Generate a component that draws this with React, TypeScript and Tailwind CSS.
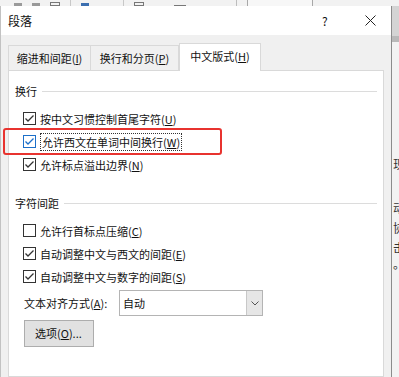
import React from "react";

const font = "font-['Noto_Sans_CJK_SC',sans-serif]";

function CheckBox({ checked, focus }: { checked: boolean; focus?: boolean }) {
  const c = focus ? "#1c6fc9" : "#333333";
  return (
    <span
      className="flex h-[13px] w-[13px] shrink-0 items-center justify-center border bg-white"
      style={{ borderColor: c }}
    >
      {checked && (
        <svg width="11" height="11" viewBox="0 0 11 11">
          <polyline points="1.5,5.5 4,8 9.5,2.5" fill="none" stroke={c} strokeWidth="1.3" />
        </svg>
      )}
    </span>
  );
}

function Row({
  checked,
  label,
  mnemonic,
  focus,
}: {
  checked: boolean;
  label: string;
  mnemonic: string;
  focus?: boolean;
}) {
  return (
    <div className="relative flex h-[23px] items-center gap-[4px] pl-[14px]">
      <CheckBox checked={checked} focus={focus} />
      <span className={focus ? "border border-dotted border-[#333] px-px leading-[16px]" : "leading-[16px]"}>
        {label}(<u>{mnemonic}</u>)
      </span>
      {focus && (
        <span className="absolute -left-[6px] -top-[2px] h-[27px] w-[219px] rounded-[3px] border-[2.5px] border-[#e8332f]" />
      )}
    </div>
  );
}

function Section({ title, children }: { title: string; children: React.ReactNode }) {
  return (
    <div className="flex flex-col">
      <div className="flex items-center gap-[5px] pl-[6px] pr-[6px] leading-[16px]">
        <span>{title}</span>
        <span className="h-px flex-1 bg-[#dcdcdc]" />
      </div>
      <div className="mt-[8px] flex flex-col">{children}</div>
    </div>
  );
}

export default function App() {
  return (
    <div className={`${font} h-[377px] w-[399px] overflow-hidden bg-[#e9e9e9] text-[11px] text-[#111]`}>
      {/* ribbon strip behind the dialog */}
      <div className="flex h-[6px] items-end gap-[10px] bg-[#f2f2f2] pl-[14px]">
        <span className="h-[3px] w-[8px] bg-[#9a9a9a]" />
        <span className="h-[3px] w-[8px] bg-[#9a9a9a]" />
        <span className="h-[4px] w-[10px] border border-[#777]" />
        <span className="h-[6px] w-px bg-[#c8c8c8]" />
        <span className="h-[3px] w-[8px] bg-[#3b6fb0]" />
        <span className="ml-[24px] h-[6px] w-px bg-[#c8c8c8]" />
        <span className="h-[4px] w-[10px] border border-[#777]" />
        <span className="ml-[20px] h-px w-[12px] bg-[#777]" />
        <span className="ml-[40px] h-[6px] w-px bg-[#bdbdbd]" />
        <span className="h-[6px] w-[66px] border-x border-[#a8a8a8] bg-[#f7f7f7]" />
      </div>

      <div className="flex h-[371px]">
        {/* dialog */}
        <div className="flex w-[392px] flex-col border-l border-r border-[#c2c2c2] border-r-[#8c8c8c] bg-[#f0f0f0]">
          <div className="flex h-[29px] shrink-0 items-center bg-white pl-[7px]">
            <span className="text-[12px]">段落</span>
            <span className="ml-[290px] text-[12px]">?</span>
            <svg className="ml-[37px]" width="11" height="11" viewBox="0 0 11 11">
              <path d="M0.5 0.5 L10.5 10.5 M10.5 0.5 L0.5 10.5" stroke="#222" strokeWidth="1" />
            </svg>
          </div>

          <div className="flex flex-1 flex-col pt-[8px]">
            {/* tabs */}
            <div className="relative z-10 flex items-end pl-[7px]">
              <div className="flex h-[25px] w-[83px] items-center justify-center border border-b-0 border-[#d9d9d9] bg-[#f0f0f0]">
                缩进和间距(<u>I</u>)
              </div>
              <div className="flex h-[25px] w-[88px] items-center justify-center border border-b-0 border-l-0 border-[#d9d9d9] bg-[#f0f0f0]">
                换行和分页(<u>P</u>)
              </div>
              <div className="-mb-px flex h-[28px] w-[82px] items-center justify-center border border-b-0 border-[#d9d9d9] bg-white pb-[2px]">
                中文版式(<u>H</u>)
              </div>
            </div>

            {/* panel */}
            <div className="mx-[7px] flex flex-1 flex-col border border-[#d9d9d9] bg-white pt-[12px]">
              <Section title="换行">
                <Row checked label="按中文习惯控制首尾字符" mnemonic="U" />
                <Row checked focus label="允许西文在单词中间换行" mnemonic="W" />
                <Row checked label="允许标点溢出边界" mnemonic="N" />
              </Section>

              <div className="mt-[19px]">
                <Section title="字符间距">
                  <Row checked={false} label="允许行首标点压缩" mnemonic="C" />
                  <Row checked label="自动调整中文与西文的间距" mnemonic="E" />
                  <Row checked label="自动调整中文与数字的间距" mnemonic="S" />
                </Section>
              </div>

              <div className="mt-[2px] flex h-[26px] items-center pl-[15px]">
                <span className="w-[95px]">
                  文本对齐方式(<u>A</u>):
                </span>
                <div className="flex h-[26px] w-[144px] border border-[#b4b4b4] bg-white">
                  <span className="flex-1 pl-[3px] leading-[24px]">自动</span>
                  <span className="flex w-[16px] items-center justify-center border-l border-[#c8c8c8] bg-[#e6e6e6]">
                    <svg width="8" height="5" viewBox="0 0 8 5">
                      <polyline points="0.5,0.5 4,4 7.5,0.5" fill="none" stroke="#555" strokeWidth="1" />
                    </svg>
                  </span>
                </div>
              </div>

              <div className="mt-[4px] pl-[15px]">
                <div className="flex h-[27px] w-[70px] items-center border border-[#adadad] bg-[#e1e1e1] pl-[10px]">
                  选项(<u>O</u>)...
                </div>
              </div>
            </div>
          </div>
        </div>

        {/* document behind, right edge */}
        <div className="flex flex-1 flex-col overflow-hidden">
          <div className="h-[30px] bg-[#d4d4d4]" />
          <div className="h-[6px] bg-[#b9b9b9]" />
          <div className="flex flex-1 flex-col bg-[#f3f3f3] pl-[1px] text-[12px] leading-[20px] text-[#333]">
            <span className="mt-[112px] whitespace-nowrap">现</span>
            <span className="mt-[24px] whitespace-nowrap">动</span>
            <span className="whitespace-nowrap">协</span>
            <span className="whitespace-nowrap">击</span>
            <span className="-mt-[4px] whitespace-nowrap">。</span>
          </div>
        </div>
      </div>
    </div>
  );
}
